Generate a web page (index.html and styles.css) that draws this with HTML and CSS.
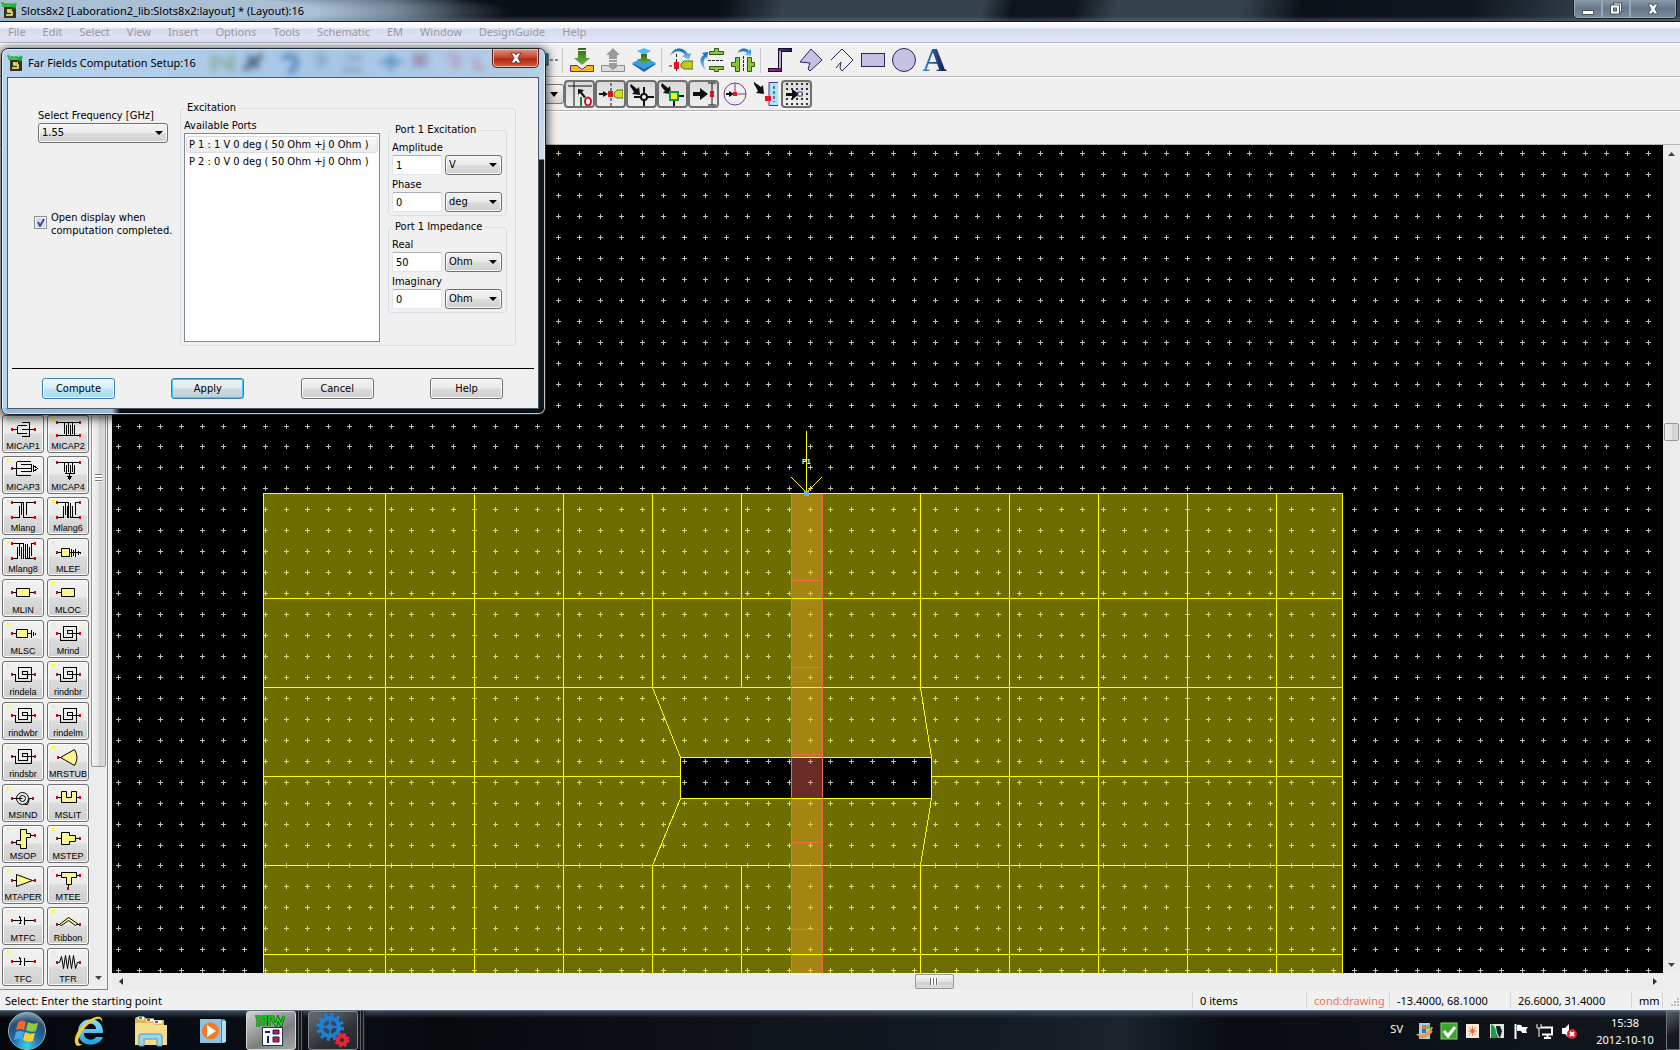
FILE: index.html
```
<!DOCTYPE html>
<html lang="en">
<head>
<meta charset="utf-8">
<title>Slots8x2 [Laboration2_lib:Slots8x2:layout] * (Layout):16</title>
<link rel="stylesheet" href="styles.css">
</head>
<body>
<svg class="defs" width="0" height="0" aria-hidden="true">
  <defs>
    <symbol id="ads" viewBox="0 0 16 16">
      <rect x="3" y="5" width="12" height="11" fill="#3a3020"/>
      <path d="M6 8h5M7 8v2h4v3H5" fill="none" stroke="#fff27a" stroke-width="1.500"/>
      <path d="M0 1h2v4M4 5V2h2v3M8 5V2h2v3M11 2l1 3 1-3 1 3 1-4" fill="none" stroke="#18b52a" stroke-width="1.500"/>
    </symbol>
    <linearGradient id="gGreen" x2="0" y2="1"><stop offset="0" stop-color="#2f6a1c"/><stop offset="1" stop-color="#6db33f"/></linearGradient>
    <linearGradient id="gBlue" x2="0" y2="1"><stop offset="0" stop-color="#0a64b4"/><stop offset="1" stop-color="#8fd0f4"/></linearGradient>
    <linearGradient id="gStep" x2="1" y2="0"><stop offset="0" stop-color="#b020b0"/><stop offset="1" stop-color="#2a2060"/></linearGradient>
    <linearGradient id="gText" x2="1" y2="0"><stop offset="0" stop-color="#3a94d8"/><stop offset="1" stop-color="#101040"/></linearGradient>
    <radialGradient id="gOrb" cx=".5" cy=".9" r=".9"><stop offset="0" stop-color="#39d4f4"/><stop offset=".4" stop-color="#1c6fae"/><stop offset=".75" stop-color="#2b4d72"/><stop offset="1" stop-color="#8fa6bb"/></radialGradient>
    <linearGradient id="gIe" x2="0" y2="1"><stop offset="0" stop-color="#8be0fb"/><stop offset="1" stop-color="#1e9be6"/></linearGradient>
  </defs>
</svg>

<header class="titlebar">
  <svg class="app-icon" width="16" height="16"><use href="#ads"/></svg>
  <h1 class="title-text">Slots8x2 [Laboration2_lib:Slots8x2:layout] * (Layout):16</h1>
  <div class="win-buttons">
    <button aria-label="Minimize"><svg width="14" height="12"><rect x="1.5" y="7.500" width="11" height="4" fill="#fff" stroke="#49545f"/></svg></button>
    <button aria-label="Restore"><svg width="14" height="13"><rect x="4.500" y="1" width="8" height="9" fill="#fff" stroke="#49545f"/><rect x="1.500" y="3" width="9" height="9" fill="#fff" stroke="#49545f"/><rect x="4.500" y="6" width="3" height="3" fill="#8496a8" stroke="#49545f"/></svg></button>
    <button class="wide" aria-label="Close"><svg width="14" height="12"><path d="M2 1h4l1 2 1-2h4L9 6l3 5H8L7 9l-1 2H2l3-5z" fill="#fff" stroke="#49545f"/></svg></button>
  </div>
</header>

<nav class="menubar">
  <a href="#">File</a><a href="#">Edit</a><a href="#">Select</a><a href="#">View</a><a href="#">Insert</a><a href="#">Options</a><a href="#">Tools</a><a href="#">Schematic</a><a href="#">EM</a><a href="#">Window</a><a href="#">DesignGuide</a><a href="#">Help</a>
</nav>

<div class="toolbar tools-draw">
  <svg class="stub" width="14" height="24"><rect x="0" y="6" width="3" height="11" fill="#2ac0d8" stroke="#302060"/><path d="M5 12h9" stroke="#222" stroke-dasharray="3 2"/></svg>
  <span class="sep"></span>
  <button aria-label="Push into hierarchy"><svg width="24" height="24"><path d="M8 0h8v2H8zM8 3h8v7h4l-8 7-8-7h4z" fill="url(#gGreen)"/><path d="M.5 17.500h6.500l5 4 5-4h6.500v6H.5z" fill="#fdb913" stroke="#5c2d91"/></svg></button>
  <button aria-label="Pop out of hierarchy"><svg width="24" height="24"><path d="M12 0l7 7h-3v4H8V7H5zM8 12h8v2H8zM8 15h8v3l-4 3-4-3z" fill="#9a9a9a"/><path d="M.5 17.500h6.500l5 4 5-4h6.500v6H.5z" fill="#ddd" stroke="#8a8a8a"/></svg></button>
  <button aria-label="Insert layer stack"><svg width="24" height="24"><path d="M0 16l12-6 12 6-12 8z" fill="#1268b8"/><path d="M0 15l12-6 12 6-12 6z" fill="#3aa0e6"/><path d="M5 3l7-3 7 3-7 4z" fill="#58b8f0"/><path d="M9 6h6v5h4l-7 6-7-6h4z" fill="url(#gGreen)"/></svg></button>
  <span class="sep"></span>
  <button aria-label="Rotate"><svg width="24" height="24"><path d="M1 8C4-1 14-2 19 6l3-1-2 7-7-4 3-1C12 2 6 2 1 8z" fill="url(#gBlue)"/><path d="M0 18h6M7.500 6v17" stroke="#222" stroke-dasharray="3 2"/><rect x="5" y="14" width="5" height="7" fill="#e01020"/><path d="M12 16l3-3h9v8h-9l-3-2z" fill="#b8cc20" stroke="#5c6a10"/></svg></button>
  <button aria-label="Mirror vertically"><svg width="24" height="24"><path d="M6 22C-1 17-1 9 4 7L2 5l6-1-1 7-1-2c-3 3-3 8 0 13z" fill="url(#gBlue)"/><path d="M8 12.500h16" stroke="#222" stroke-dasharray="3 1"/><path d="M9.500 3.500h5v-3h4v3h5v3h-14zM9.500 18.500h14v3h-5v2h-4v-2h-5z" fill="#8cc63f" stroke="#2f5a10"/></svg></button>
  <button aria-label="Mirror horizontally"><svg width="24" height="24"><path d="M6 6c2-6 9-7 12-3l2-2v7l-6-1 2-2c-3-2-7-2-10 1z" fill="url(#gBlue)"/><path d="M12.500 8v16" stroke="#222" stroke-dasharray="3 1"/><path d="M4.500 9.500h4v14h-4v-5h-4v-4h4zM16.500 9.500h4v5h3v4h-3v5h-4z" fill="#8cc63f" stroke="#2f5a10"/></svg></button>
  <span class="sep"></span>
  <button aria-label="Insert path"><svg width="24" height="24"><path d="M0 22h12V2h12" fill="none" stroke="#15101f" stroke-width="4"/><path d="M1 22h11V2h11" fill="none" stroke="url(#gStep)" stroke-width="2"/><path d="M12 20V3" stroke="#b9a6e6" stroke-width="2"/></svg></button>
  <button aria-label="Insert polygon"><svg width="24" height="24"><path d="M12 1l11 11-12 11-2-2 2-6-10-1z" fill="#c5c1e2" stroke="#29275a"/></svg></button>
  <button aria-label="Insert polyline"><svg width="24" height="24"><path d="M1 12L12 1l11 11-11 11-2-3 1-6-5 6" fill="none" stroke="#29275a"/></svg></button>
  <button aria-label="Insert rectangle"><svg width="24" height="24"><rect x=".5" y="5.500" width="23" height="13" fill="#c5c1e2" stroke="#29275a"/></svg></button>
  <button aria-label="Insert circle"><svg width="24" height="24"><circle cx="12" cy="12" r="11.500" fill="#c5c1e2" stroke="#29275a"/></svg></button>
  <button aria-label="Insert text"><span class="glyph-a">A</span></button>
</div>

<div class="toolbar tools-snap">
  <button class="drop" aria-label="Layer list"><svg width="8" height="5"><path d="M0 0h8L4 5z" fill="#000"/></svg></button>
  <button class="on" aria-label="Snap enabled"><svg width="24" height="24"><path d="M0 4h24M6 0v24" stroke="#111"/><path d="M10 7l6 1-2 2 4 5-2 1-4-5-2 2z" fill="#111"/><path d="M13 15v9" stroke="#0a8a3a" stroke-width="2"/><ellipse cx="20" cy="19.500" rx="3" ry="4" fill="none" stroke="#d01030" stroke-width="2"/></svg></button>
  <button class="on" aria-label="Pin snap"><svg width="24" height="24"><path d="M0 12h5" stroke="#111" stroke-width="2"/><path d="M4 9l5 3-5 3z" fill="#111"/><path d="M12 1v23" stroke="#111" stroke-dasharray="3 2"/><rect x="9" y="9" width="5" height="6" fill="#e01020"/><path d="M15 11l3-3h6v8h-6l-3-2z" fill="#d8dc20" stroke="#4a7a10"/></svg></button>
  <button class="on" aria-label="Vertex snap"><svg width="24" height="24"><path d="M1 2l6 5 2-2 1 8-8-1 2-2-4-6z" fill="#111"/><path d="M14 5v19M4 15h20" stroke="#111" stroke-width="2"/><circle cx="14" cy="15" r="3" fill="#fff" stroke="#111" stroke-width="2"/></svg></button>
  <button class="on" aria-label="Midpoint snap"><svg width="24" height="24"><path d="M1 1l6 5 2-2 1 8-8-1 2-2-4-5z" fill="#111"/><path d="M13 15v9M13 14h10" stroke="#111" stroke-width="2"/><rect x="9" y="10" width="8" height="8" fill="#fff020" stroke="#08a040" stroke-width="2"/></svg></button>
  <button class="on" aria-label="Edge snap"><svg width="24" height="24"><path d="M1 10h7V6l8 6-8 6v-4H1z" fill="#111"/><path d="M20 1v22M16 1h8M16 23h8" stroke="#111"/><rect x="18" y="9" width="4" height="6" fill="#e01020"/></svg></button>
  <button aria-label="Arc snap"><svg width="24" height="24"><circle cx="12" cy="12" r="11" fill="none" stroke="#7a3a9a"/><path d="M12 1v11h11" fill="none" stroke="#7a3a9a"/><path d="M3 12h3" stroke="#111" stroke-width="2"/><path d="M6 9l5 3-5 3z" fill="#111"/><rect x="10" y="10" width="4" height="4" fill="#f01020"/></svg></button>
  <button aria-label="Intersection snap"><svg width="24" height="24"><path d="M0 0l7 5 2-2 1 9-8-1 2-2-4-7z" fill="#111"/><path d="M24 .5h-9v23h9" fill="#a9e4f8" stroke="#5c2d91"/><path d="M20 4v16" stroke="#111" stroke-dasharray="3 2"/><rect x="11" y="14" width="6" height="5" fill="#f01020"/></svg></button>
  <button class="on" aria-label="Grid snap"><svg width="24" height="24"><path d="M2 1v23M7 1v23M12 1v23M17 1v23M22 1v23" stroke="#333" stroke-width="2" stroke-dasharray="2 3"/><path d="M1 11h6V7l7 5-7 6v-4H1z" fill="#111"/><rect x="13" y="10" width="4" height="4" fill="#fff" stroke="#5c2d91"/></svg></button>
</div>

<div class="toolbar tools-empty"></div>

<main class="workspace">
  <aside class="palette">
    <div class="parts" id="parts"></div>
    <div class="scroll-v palette-scroll">
      <div class="thumb palette-thumb"><i class="grip-v"></i></div>
      <button class="arrow" aria-label="Scroll down"><svg width="7" height="4"><path d="M0 0h7L3.500 4z" fill="#444"/></svg></button>
    </div>
  </aside>

  <section class="view">
    <svg class="layout-canvas" shape-rendering="crispEdges" aria-label="Layout mesh">
      <path id="grid" stroke="#c0c0c0" fill="none"/>
      <path d="M151 348H1230V1400H151ZM568 612V653H819V612Z" fill="#ff0" fill-opacity=".43" fill-rule="evenodd"/>
      <rect x="679" y="348" width="31" height="264" fill="#f4a82c" fill-opacity=".41"/>
      <rect x="679" y="612" width="31" height="41" fill="#ff6c57" fill-opacity=".41"/>
      <rect x="679" y="653" width="31" height="747" fill="#f4a82c" fill-opacity=".41"/>
      <g transform="translate(.5 .5)" fill="none">
        <path stroke="#ff0" d="M151 1400V348H1230V1400M273 348V1400M362 348V1400M451 348V1400M540 348V542L568 612V653L540 720V1400M629 348V542M629 720V1400M808 348V542L819 612V653L808 720V1400M897 348V1400M986 348V1400M1075 348V1400M1164 348V1400M151 453H1230M151 542H1230M151 631H568M819 631H1230M151 720H1230M151 809H1230M568 612H819M568 653H819"/>
        <path stroke="#f06a50" d="M679 1400V348M710 348V1400M679 435H710M679 522H710M679 609H710M679 697H710M679 784H710"/>
        <path stroke="#ff0" d="M679 348H710M694 285V348M679 332L694 347M694 347L709 332"/>
      </g>
      <rect x="692" y="346" width="5" height="5" fill="#60b0ff"/>
      <text class="port-name" x="690" y="319">P1</text>
    </svg>
    <div class="scroll-v">
      <button class="arrow" aria-label="Scroll up"><svg width="7" height="4"><path d="M0 4h7L3.500 0z" fill="#444"/></svg></button>
      <div class="thumb view-thumb"></div>
      <button class="arrow" aria-label="Scroll down"><svg width="7" height="4"><path d="M0 0h7L3.500 4z" fill="#444"/></svg></button>
    </div>
    <div class="scroll-h">
      <button class="arrow" aria-label="Scroll left"><svg width="4" height="7"><path d="M4 0v7L0 3.500z" fill="#333"/></svg></button>
      <div class="thumb wide-thumb"><i class="grip-h"></i></div>
      <button class="arrow" aria-label="Scroll right"><svg width="4" height="7"><path d="M0 0v7l4-3.500z" fill="#333"/></svg></button>
    </div>
  </section>
</main>

<footer class="statusbar">
  <span class="hint">Select: Enter the starting point</span>
  <span class="cell items">0 items</span>
  <span class="cell layer">cond:drawing</span>
  <span class="cell pos">-13.4000, 68.1000</span>
  <span class="cell pos">26.6000, 31.4000</span>
  <span class="cell unit">mm</span>
  <span class="cell size-grip"><svg width="9" height="9"><path d="M7 1h2M4 4h2M7 4h2M1 7h2M4 7h2M7 7h2" stroke="#bbb" stroke-width="2"/></svg></span>
</footer>

<div class="taskbar">
  <button class="orb" aria-label="Start"><svg width="40" height="40"><circle cx="20" cy="20" r="18.500" fill="url(#gOrb)" stroke="#9fb4c6"/><path d="M11 11q5-3 8 0l-2 8q-3-2-8 0z" fill="#f0672a"/><path d="M21 11q4 3 10 1l-2 8q-5 2-10-1z" fill="#94c83c"/><path d="M9 21q5-2 8 0l-2 8q-3-2-8 0z" fill="#4aa6e8"/><path d="M18 21q5 3 10 1l-2 8q-5 2-10-1z" fill="#fcd02e"/></svg></button>
  <button class="pin" aria-label="Internet Explorer"><svg width="32" height="32"><path d="M30 18H11c0 8 10 8 12 4h7C26 33 5 33 5 17 5 0 31 0 30 18zM11 14h12c0-7-11-7-12 0z" fill="url(#gIe)"/><path d="M29 8c2-8-6-8-14-2C5 13-1 24 3 30c2 2 5 0 7-1-5 1-6-3-3-9C11 12 22 2 27 4c2 1 2 3 2 4z" fill="#f8cf2c"/></svg></button>
  <button class="pin" aria-label="Explorer"><svg width="34" height="32"><path d="M1 4l1-2h9l2 3h17v5H1z" fill="#d9b75a"/><path d="M4 3h6M12 5h8M20 7h8" stroke="#fff" stroke-width="3"/><path d="M5 3h3" stroke="#3aa04a" stroke-width="2"/><path d="M13 5h3" stroke="#d04030" stroke-width="2"/><path d="M21 7h3" stroke="#3070d0" stroke-width="2"/><path d="M1 8h18l2 2h12v20H1z" fill="#f3dc8a"/><path d="M5 31V21q0-2 2-2h19q2 0 2 2v10h-5v-7H10v7z" fill="#9fd4ef" stroke="#4a9cc8"/></svg></button>
  <button class="pin" aria-label="Media player"><svg width="28" height="28"><path d="M4 3l22-1v24l-22-1z" fill="#3e86b5"/><path d="M23 3l4 1v21l-4 1z" fill="#b4dcf2"/><rect x="1" y="2" width="21" height="24" fill="#8ec3e3"/><circle cx="11.500" cy="14" r="8.500" fill="#f47a20"/><path d="M8 8l9 6-9 6z" fill="#fff"/></svg></button>
  <button class="running active" aria-label="Advanced Design System"><svg width="34" height="32"><path d="M1 1h3v11M8 11V2h4v9M15 11V2h4v4l3 4 2-7 3 7 3-9" fill="none" stroke="#0a5a0a" stroke-width="3"/><path d="M1 1h3v11M8 11V2h4v9M15 11V2h4v4l3 4 2-7 3 7 3-9" fill="none" stroke="#14e01c" stroke-width="1.500"/><rect x="8.500" y="12.500" width="20" height="18" fill="#fff" stroke="#333"/><path d="M11 17h5M14 21v7" stroke="#102080" stroke-width="2"/><path d="M19 15h6v4h-6zM19 22h6v5h-6z" fill="#d02020" stroke="#102080"/></svg></button>
  <i class="stack"></i>
  <button class="running sim" aria-label="Simulation"><svg width="34" height="36"><circle cx="14" cy="14" r="9" fill="none" stroke="#1b80d8" stroke-width="4"/><circle cx="14" cy="14" r="12" fill="none" stroke="#1b80d8" stroke-width="4" stroke-dasharray="3 3.300"/><path d="M14 4v20M4 14h20" stroke="#1b80d8" stroke-width="2"/><circle cx="14" cy="14" r="3" fill="#1b80d8"/><circle cx="26" cy="27" r="4" fill="none" stroke="#e02838" stroke-width="4"/><circle cx="26" cy="27" r="6" fill="none" stroke="#e02838" stroke-width="3" stroke-dasharray="2.400 2.400"/></svg></button>
  <i class="stack"></i>
  <div class="tray">
    <span class="lang">SV</span>
    <svg width="18" height="18"><rect x="3" y="1" width="11" height="16" fill="#9fd0ee"/><rect x="6" y="3" width="4" height="4" fill="#e8743a"/><rect x="10" y="3" width="4" height="4" fill="#7ec04a"/><rect x="6" y="7" width="4" height="4" fill="#2a7ad0"/><path d="M1 12C4 16 14 12 16 5M3 15c5 1 10-2 13-6" stroke="#f29a30" stroke-width="2" fill="none"/></svg>
    <svg width="18" height="18"><rect x="1" y="1" width="16" height="16" fill="#3ba52c" stroke="#8fd07a"/><path d="M4 9l4 5 7-9" stroke="#fff" stroke-width="3" fill="none"/></svg>
    <svg width="18" height="18"><rect x="2" y="2" width="13" height="14" fill="#fbe9dc"/><path d="M5 5l7 8M12 5l-7 8M4 9h9M8.500 4v10" stroke="#e08a68"/><circle cx="8.500" cy="9" r="2" fill="#d86a40"/></svg>
    <svg width="18" height="18"><rect x="2" y="2" width="14" height="14" fill="#d6ead6"/><path d="M3 2q5 2 5 9l3 5H3z" fill="#1f9a54"/><path d="M8 4h4l2 5-2 7-3-5z" fill="#11202a"/></svg>
    <svg width="18" height="18"><path d="M3.500 2v15" stroke="#fff" stroke-width="2"/><path d="M5 3q3-1 5 1v6q-2-2-5-1zM10 5h6l-2 3 1 3h-5z" fill="#fff"/></svg>
    <svg width="18" height="18"><path d="M5 5.500h11v7H6M8 16h7M11.500 13v3" stroke="#fff" stroke-width="2" fill="none"/><path d="M1 2v4h4V2M3 6v9" stroke="#fff" fill="none"/></svg>
    <svg width="18" height="18"><path d="M2 6h3l4-4v14l-4-4H2z" fill="#fff"/><circle cx="12" cy="12" r="5" fill="#d8242c"/><path d="M10 10l4 4M14 10l-4 4" stroke="#fff" stroke-width="2"/></svg>
    <div class="clock"><time>15:38</time><time>2012-10-10</time></div>
    <button class="show-desktop" aria-label="Show desktop"></button>
  </div>
</div>

<section class="dialog" role="dialog" aria-labelledby="dlg-title">
  <div class="dialog-title">
    <svg class="app-icon" width="16" height="16"><use href="#ads"/></svg>
    <h2 class="title-text" id="dlg-title">Far Fields Computation Setup:16</h2>
    <svg class="glass" width="282" height="27" aria-hidden="true">
      <g fill="none" stroke-width="4">
        <path d="M4 4v18M10 8l8 10M22 4v18" stroke="#6f9a6a"/>
        <path d="M34 20L52 5M38 6l10 12" stroke="#2a3a4c" stroke-width="5"/>
        <path d="M72 8q14-5 14 4t-8 10" stroke="#2f6aa8" stroke-width="5"/>
        <path d="M104 6h10v8h-8M136 8h16M132 20h20" stroke="#7d93ab"/>
        <path d="M170 12h22M181 4v17" stroke="#3f78b4"/>
        <path d="M204 5h12v10h-12z" stroke="#8f90b4"/><path d="M207 10h5" stroke="#b8405c" stroke-width="6"/>
        <path d="M236 6h12v9h-8M266 6v12h8" stroke="#b88aa4"/>
      </g>
    </svg>
    <button class="dialog-close" aria-label="Close"><svg width="14" height="12"><path d="M2 1h4l1 2 1-2h4L9 6l3 5H8L7 9l-1 2H2l3-5z" fill="#fff" stroke="#6a3030"/></svg></button>
  </div>
  <form class="dialog-body">
    <div class="dialog-main">
      <div class="left-col">
        <label for="freq">Select Frequency [GHz]</label>
        <select id="freq" class="freq"><option>1.55</option></select>
        <div class="check">
          <input type="checkbox" id="open" checked>
          <label for="open">Open display when<br>computation completed.</label>
        </div>
      </div>
      <fieldset class="excitation">
        <legend>Excitation</legend>
        <div class="exc-cols">
          <div class="ports">
            <label for="ports">Available Ports</label>
            <select id="ports" size="2" class="port-list">
              <option class="current">P 1 : 1 V 0 deg ( 50 Ohm +j 0 Ohm )</option>
              <option>P 2 : 0 V 0 deg ( 50 Ohm +j 0 Ohm )</option>
            </select>
          </div>
          <div class="port-params">
            <fieldset>
              <legend>Port 1 Excitation</legend>
              <label for="amp">Amplitude</label>
              <div class="pair"><input type="text" id="amp" value="1"><select aria-label="Amplitude unit"><option>V</option></select></div>
              <label for="phase">Phase</label>
              <div class="pair"><input type="text" id="phase" value="0"><select aria-label="Phase unit"><option>deg</option></select></div>
            </fieldset>
            <fieldset>
              <legend>Port 1 Impedance</legend>
              <label for="real">Real</label>
              <div class="pair"><input type="text" id="real" value="50"><select aria-label="Real unit"><option>Ohm</option></select></div>
              <label for="imag">Imaginary</label>
              <div class="pair"><input type="text" id="imag" value="0"><select aria-label="Imaginary unit"><option>Ohm</option></select></div>
            </fieldset>
          </div>
        </div>
      </fieldset>
    </div>
    <div class="dialog-actions">
      <button type="button" class="hot">Compute</button>
      <button type="button" class="default">Apply</button>
      <button type="button">Cancel</button>
      <button type="button">Help</button>
    </div>
  </form>
</section>
<script src="app.js"></script>
</body>
</html>
```
FILE: styles.css
```
:root {
  --ui: "Noto Sans", "Open Sans", sans-serif;
  --form: "DejaVu Sans Condensed", "DejaVu Sans", sans-serif;
  --face: #f0f0f0;
}

* { box-sizing: border-box; }

body {
  margin: 0;
  height: 100vh;
  display: flex;
  flex-direction: column;
  overflow: hidden;
  background: var(--face);
  font: 11px/14px var(--ui);
  color: #000;
}

button, input, select { font: inherit; color: inherit; margin: 0; }
button { padding: 0; border: 0; background: none; }
h1, h2 { margin: 0; font-weight: 400; }
svg { display: block; flex: none; }
.defs { position: absolute; }

/* main window frame */
.titlebar {
  flex: none;
  height: 22px;
  display: flex;
  padding: 2px 3px 0 1px;
  gap: 4px;
  border-bottom: 1px solid #14181e;
  background:
    linear-gradient(transparent 16px, #8896a855),
    radial-gradient(ellipse 380px 30px at 130px 12px, #a9bfd4 50%, #a9bfd400),
    linear-gradient(105deg, #5f7080 0, #2c3947 380px, #0b1017 450px, #0b1017 700px, #36424e 760px, #36424e 950px, #0e141b 980px, #11161e 1040px, #36424e 1080px, #36424e 1200px, #0c1118 1260px, #10161e 1420px, #3a4654 1560px);
}
.title-text { font-size: 11px; line-height: 18px; white-space: nowrap; }
.win-buttons {
  display: flex;
  margin: -2px 0 0 auto;
  height: 19px;
  border: 1px solid #1b232c;
  border-top: 0;
  border-radius: 0 0 5px 5px;
  overflow: hidden;
}
.win-buttons button {
  width: 28px;
  display: grid;
  place-items: center;
  border: 1px solid #9aa8b6;
  border-top: 0;
  background: linear-gradient(#8d9baa, #66778a 50%, #7b8b9c);
}
.win-buttons .wide { width: 46px; }

.menubar {
  flex: none;
  height: 21px;
  display: flex;
  gap: 17px;
  padding: 0 8px;
  line-height: 20px;
  border-bottom: 1px solid #b3b8cf;
  background: linear-gradient(#fff 0, #f2f3f9 6px, #d5dbee 7px, #e1e6f6 19px);
}
.menubar a { color: #959aa3; text-decoration: none; }

.toolbar {
  flex: none;
  height: 34px;
  display: flex;
  align-items: center;
  padding-left: 545px;
  border-top: 1px solid #fff;
  border-bottom: 1px solid #b4b4b4;
}
.toolbar button { flex: none; width: 31px; height: 28px; display: grid; place-items: center; }
.toolbar .sep { width: 1px; height: 25px; margin: 0 3px 0 2px; background: #c8c8c8; }
.toolbar .stub { margin-right: 1px; }
.toolbar .drop { width: 19px; height: 20px; border: 1px solid #777; border-left: 0; border-radius: 0 3px 3px 0; background: linear-gradient(#f3f3f3, #d6d6d6); }
.toolbar .on { border: 2px solid #707070; border-radius: 4px; background: linear-gradient(#d9d9d9, #efefef); }
.glyph-a {
  font: bold 34px/28px "Liberation Serif", serif;
  color: transparent;
  background: linear-gradient(90deg, #3a94d8, #101040);
  background-clip: text;
}

/* workspace */
.workspace { flex: 1; min-height: 0; display: flex; gap: 4px; }
.palette {
  flex: none;
  width: 108px;
  height: 100%;
  display: flex;
  justify-content: space-between;
  padding: 0 1px 3px 2px;
  border-right: 1px solid #82878f;
  border-bottom: 1px solid #82878f;
}
.parts {
  display: grid;
  grid-template-columns: 42px 42px;
  gap: 3px;
  align-content: end;
}
.part {
  height: 38px;
  display: flex;
  flex-direction: column;
  align-items: center;
  border: 1px solid #707070;
  border-radius: 3px;
  box-shadow: inset 0 0 0 1px #fafafa;
  background: linear-gradient(#f2f2f2 0, #ebebeb 17px, #dcdcdc 18px, #cfcfcf);
  font: 9px/12px "Liberation Sans", sans-serif;
}
.part svg { fill: none; stroke: #000; }

.scroll-v { width: 17px; display: flex; flex-direction: column; align-items: center; background: #ececec; }
.scroll-v .arrow { height: 17px; width: 17px; display: grid; place-items: center; }
.thumb { border: 1px solid #979797; border-radius: 2px; background: linear-gradient(90deg, #f5f5f5, #e4e4e4 50%, #cfcfd2 52%, #dcdcde); }
.palette-scroll { width: 16px; justify-content: space-between; }
.palette-thumb { width: 15px; height: 74%; padding-top: 328px; }
.grip-v { display: block; width: 7px; height: 8px; margin: 0 auto; background: repeating-linear-gradient(#777 0 1px, #fff 1px 3px); }

.view { flex: 1; min-width: 0; display: grid; grid-template: minmax(0, 1fr) 17px / minmax(0, 1fr) 17px; }
.layout-canvas { width: 100%; height: 100%; background: #000; }
.port-name { font: bold 7px "Liberation Sans", sans-serif; fill: #fff; }
.view-thumb { width: 15px; height: 18px; margin: 261px 0 auto; }
.scroll-h { display: flex; align-items: center; background: #ececec; }
.scroll-h .arrow { width: 17px; height: 17px; display: grid; place-items: center; }
.wide-thumb { width: 39px; height: 15px; margin: 0 auto 0 calc(50% + 10px); display: grid; place-items: center; background: linear-gradient(#f5f5f5, #e4e4e4 50%, #cfcfd2 52%, #dcdcde); }
.grip-h { width: 8px; height: 7px; background: repeating-linear-gradient(90deg, #666 0 1px, #fff 1px 3px); }

.statusbar { flex: none; height: 20px; display: flex; padding: 2px 0 2px 5px; line-height: 18px; }
.statusbar .hint { flex: 1; }
.cell { border-left: 1px solid #d4d4d4; padding-left: 7px; white-space: nowrap; }
.items { width: 114px; }
.layer { width: 83px; color: #f0705a; }
.pos { width: 121px; }
.unit { width: 31px; }
.size-grip { width: 18px; padding: 6px 0 0 7px; }

/* taskbar */
.taskbar {
  flex: none;
  height: 40px;
  display: flex;
  align-items: center;
  padding-left: 7px;
  border-top: 1px solid #5f7183;
  background:
    linear-gradient(#3a4857, #3a485700 7px),
    linear-gradient(90deg, #04080c, #0a1018 20%, #07090d 26%, #151b24 60%, #1c232c 67%, #090d13 73%, #12171e);
}
.orb { width: 40px; height: 39px; }
.pin { width: 62px; display: grid; place-items: center; }
.pin:nth-of-type(2) { margin-left: 11px; }
.running {
  width: 50px;
  height: 39px;
  display: grid;
  place-items: center;
  border: 1px solid #87898c;
  border-radius: 3px;
  background: linear-gradient(150deg, #6b6e71, #2f3337 60%, #22262a);
}
.running.active { margin-left: 2px; background: linear-gradient(150deg, #cfd1d2, #7d8082 60%, #a3a5a7); border-color: #d5d5d5; }
.running.sim { margin-left: 5px; }
.stack { width: 7px; height: 39px; background: repeating-linear-gradient(90deg, #15191e 0 2px, #5d6165 2px 3px); }
.tray { margin-left: auto; display: flex; align-items: center; color: #fff; }
.tray svg { margin-right: 6px; }
.lang { margin-right: 13px; line-height: 18px; padding-bottom: 4px; }
.clock { width: 82px; display: grid; justify-items: center; line-height: 17px; }
.show-desktop { width: 14px; height: 39px; border: 1px solid #6d7479; background: linear-gradient(150deg, #5a5f64, #15191e 60%); }

/* dialog window */
.dialog {
  position: absolute;
  left: 1px;
  top: 48px;
  width: 545px;
  padding: 0 6px 5px 5px;
  border: 1px solid #1c232b;
  border-radius: 7px;
  box-shadow: inset 0 0 0 1px #e8f1f9cc, 0 2px 10px 2px #000000aa;
  background:
    linear-gradient(#b4cde6, #cbdcec 110px, #0000 111px) right / 7px 100% no-repeat,
    linear-gradient(90deg, #9bb8d8 110px, #0b1014 118px) bottom / 100% 6px no-repeat,
    linear-gradient(#10171c, #10171c) right / 7px 100% no-repeat,
    linear-gradient(90deg, #b9d3ec, #a6c6e6 60%, #b4cde6);
}
.dialog-title { height: 28px; display: flex; align-items: center; }
.dialog-title .title-text { margin-left: 5px; }
.glass { margin-left: auto; filter: blur(3px); opacity: .7; }
.dialog-close {
  flex: none;
  align-self: flex-start;
  width: 47px;
  height: 19px;
  display: grid;
  place-items: center;
  border: 1px solid #5a1c1c;
  border-top: 0;
  border-radius: 0 0 5px 5px;
  box-shadow: inset 0 0 0 1px #f0b8a8;
  background: linear-gradient(#dc9484, #c4402a 50%, #b02410 55%, #d0643c);
}
.dialog-body {
  padding: 23px 0 9px;
  border: 1px solid #47586a;
  background: var(--face);
  font: 11px/14px var(--form);
}
.dialog-main { display: flex; }
.left-col { width: 172px; padding: 8px 0 0 30px; }
.left-col > label, .ports > label, .port-params label { display: block; }
.check { display: flex; gap: 4px; margin: 68px 0 0 -4px; line-height: 13px; white-space: nowrap; }
.check input {
  appearance: none;
  width: 13px;
  height: 13px;
  margin-top: 5px;
  border: 1px solid #8e8f8f;
  box-shadow: inset 0 0 0 1px #f4f4f4;
  background: #d9dde4 url("data:image/svg+xml,%3Csvg xmlns='http://www.w3.org/2000/svg' width='11' height='11'%3E%3Cpath d='M3 5l2 4 4-7' fill='none' stroke='%233a4f9c' stroke-width='2'/%3E%3C/svg%3E") no-repeat center;
}

fieldset { min-width: 0; margin: 0; border: 1px solid #d5dfe5; border-radius: 4px; padding: 4px 3px 3px; }
legend { padding: 0 3px; height: 14px; }
.excitation { width: 336px; }
.exc-cols { display: flex; gap: 8px; }
.port-list { display: block; width: 196px; height: 209px; padding: 2px 1px; border: 1px solid #828790; border-radius: 0; background: #fff; overflow: hidden; outline: 0; }
.port-list option { height: 17px; min-height: 17px; padding: 1px 2px 0; line-height: 15px; border: 1px solid transparent; border-radius: 3px; }
.port-list .current { border-color: #dcdcdc; background: linear-gradient(#fafafa, #ebebeb); }
.port-params { width: 119px; margin-top: 4px; display: flex; flex-direction: column; gap: 4px; }
.pair { display: flex; gap: 3px; }
.pair + label { margin-top: 3px; }

input[type="text"] {
  width: 50px;
  height: 20px;
  padding: 1px 3px 0;
  border: 1px solid #e2e3ea;
  border-top-color: #abadb3;
  border-radius: 2px;
  background: #fff;
}
select:not([size]) {
  appearance: none;
  display: block;
  width: 57px;
  height: 20px;
  padding: 0 3px;
  border: 1px solid #707070;
  border-radius: 3px;
  box-shadow: inset 0 0 0 1px #fafafa;
  background:
    url("data:image/svg+xml,%3Csvg xmlns='http://www.w3.org/2000/svg' width='8' height='4'%3E%3Cpath d='M0 0h8L4 4z'/%3E%3C/svg%3E") no-repeat right 4px center,
    linear-gradient(#f2f2f2 0, #ebebeb 48%, #dcdcdc 52%, #cfcfcf);
}
select.freq:not([size]) { width: 130px; }

.dialog-actions {
  display: flex;
  justify-content: space-between;
  margin: 22px 4px 0;
  padding: 9px 31px 0 30px;
  border-top: 1px solid #000;
}
.dialog-actions button {
  width: 73px;
  height: 21px;
  border: 1px solid #707070;
  border-radius: 3px;
  box-shadow: inset 0 0 0 1px #fafafa;
  background: linear-gradient(#f2f2f2 0, #ebebeb 48%, #dcdcdc 52%, #cfcfcf);
}
.dialog-actions .hot { border-color: #3c7fb1; background: linear-gradient(#eaf6fd 0, #d9f0fc 48%, #bee6fd 52%, #a7d9f5); }
.dialog-actions .default { border-color: #3c7fb1; box-shadow: inset 0 0 0 1px #40c8f4; background: linear-gradient(#eef3f6 0, #e2eaee 48%, #cddbe2 52%, #bccfd9); }
```
FILE: app.js
```
// Component palette: name, symbol outline, filled body, terminals as [x, y]
const ends = [[10, 13], [33, 13]];
const spiral = "M10 13H13V20H29V6H16V17H25V10H20V13H33";
const cap = "M10 13H19M17 9Q20 13 17 17M22 9V17M22 13H33";
const parts = [
  ["MICAP1", "M10 14H15M15 10V18M15 10H24M15 18H24M19 7H27M19 14H27M19 21H27M27 7V21M27 14H33", "", [[10, 14], [33, 14]]],
  ["MICAP2", "M10 7H33M10 20H33M17 7V18M21 7V18M25 7V18M19 20V9M23 20V9M27 20V9", "", [[10, 7], [33, 7], [10, 20], [33, 20]]],
  ["MICAP3", "M10 12H14M14 5V19M14 5H28M14 12H28M14 19H28M18 8H29M18 15H29M29 8V15M31 9L35 12L31 15Z", "", [[10, 12]]],
  ["MICAP4", "M10 6H33M17 6V15M21 6V15M25 6V15M19 8V17M23 8V17M27 8V17M17 17H27M22 17V22M20 20H24L22 23Z", "", [[10, 6], [33, 6]]],
  ["Mlang", "M10 5H19V17M10 20H17V8M21 5V20H33M33 5H24V17M19 5H21", "", [[10, 5], [33, 5], [10, 20], [33, 20]]],
  ["Mlang6", "M10 5H18V17M10 20H16V8M18 5H21V20M23 5V20H33M33 5H28V17M25 8V20M20 8V20", "", [[10, 5], [33, 5], [10, 20], [33, 20]]],
  ["Mlang8", "M10 5H17V17M10 20H15V8M17 5H21V20M19 8V20M23 5V20H33M33 5H29V17M25 5V20M27 8V20", "", [[10, 5], [33, 5], [10, 20], [33, 20]]],
  ["MLEF", "M10 14H14M22 14H33M24 10V18M26 11V17M28 10V18M31 12V16M33 13V15", "M14 10H22V18H14Z", [[10, 14]]],
  ["MLIN", "M10 13H14M27 13H33", "M14 9H27V17H14Z", ends],
  ["MLOC", "M10 13H14", "M14 9H27V17H14Z", [[10, 13]]],
  ["MLSC", "M10 13H14M25 13H29M29 9V17M31 11V15M33 12V14", "M14 9H25V17H14Z", [[10, 13]]],
  ["Mrind", spiral, "", ends],
  ["rindela", spiral, "", ends],
  ["rindnbr", spiral, "", ends],
  ["rindwbr", spiral, "", ends],
  ["rindelm", spiral, "", ends],
  ["rindsbr", spiral, "", ends],
  ["MRSTUB", "M11 14H13", "M13 14L27 6Q32 14 27 22Z", [[11, 14]]],
  ["MSIND", "M10 14H20M14 14A6 6 0 0 1 26 14A6 6 0 0 1 14 14M17 14A3 3 0 0 1 23 14A3 3 0 0 1 17 14M22 20H25L27 14H31", "", [[10, 14], [31, 14]]],
  ["MSLIT", "M10 13H14M29 13H33", "M14 7H19V13H24V7H29V18H14Z", ends],
  ["MSOP", "M10 17H14M28 10H33", "M18 4H24V8H28V12H24V23H18V19H14V15H18Z", [[10, 17], [33, 10]]],
  ["MSTEP", "M10 13H14M28 13H33", "M14 7H22V10H28V16H22V19H14Z", ends],
  ["MTAPER", "M10 14H14M30 14H33", "M14 8L30 14L14 20Z", [[10, 14], [33, 14]]],
  ["MTEE", "M10 9H14M29 9H33M21 18V21", "M14 6H29V11H24V18H19V11H14Z", [[10, 9], [33, 9], [21, 22]]],
  ["MTFC", cap, "", ends],
  ["Ribbon", "M10 17H14M29 17H33", "M12 17L21 10L30 16L28 18L21 13L14 18Z", [[10, 17], [33, 17]]],
  ["TFC", cap, "", ends],
  ["TFR", "M10 14H12L14 8L16 20L18 7L20 20L22 7L24 20L26 7L28 20L30 14H33", "", [[10, 14], [33, 14]]]
];

document.getElementById("parts").innerHTML = parts.map(([name, line, body, pins]) => `
  <button class="part"><svg width="40" height="24" viewBox="1 1 40 24">
    <path d="M5 3l2 2M8 3l-3 3M8 6h1" stroke="#f4f000"/>
    <path d="${line}" transform="translate(.5 .5)" shape-rendering="${name === "MSIND" || name === "TFR" ? "auto" : "crispEdges"}"/>
    ${body ? `<path d="${body}" transform="translate(.5 .5)" fill="#fdf68a"/>` : ""}
    ${pins.map(([x, y]) => `<path d="M${x} ${y - 1}v3" stroke="#e00010" stroke-width="2"/>`).join("")}
  </svg>${name}</button>`).join("");

// Snap grid marks, snapped to whole pixels
const pitch = 20.95, origin = [6.67, 8.67];
let d = "";
for (let j = 0; j < 80; j++) {
  for (let i = 0; i < 130; i++) {
    const x = Math.floor(origin[0] + i * pitch), y = Math.floor(origin[1] + j * pitch);
    d += `M${x - 2} ${y + 0.5}h5M${x + 0.5} ${y - 2}v5`;
  }
}
document.getElementById("grid").setAttribute("d", d);
```
